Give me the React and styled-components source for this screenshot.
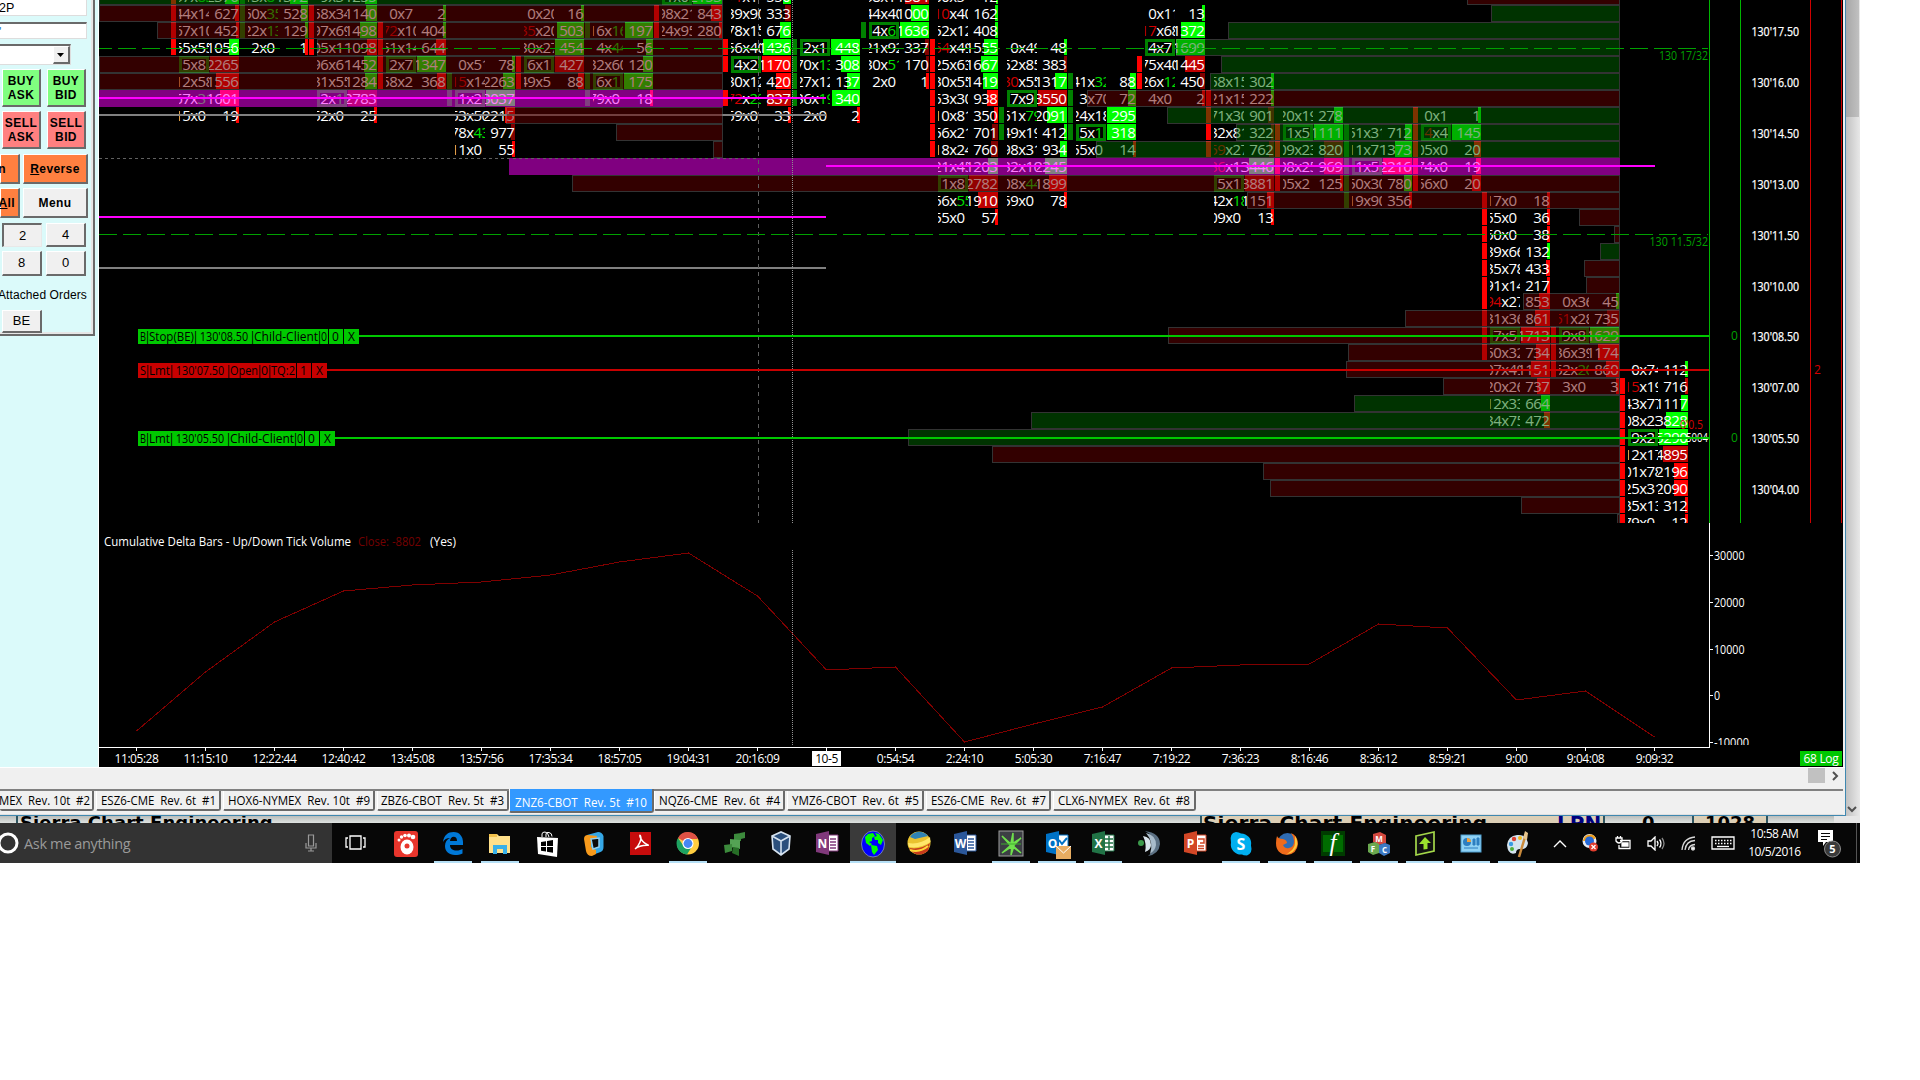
import React from 'react';
import styled, { createGlobalStyle, css } from 'styled-components';

const GlobalStyle = createGlobalStyle`
	* {
		box-sizing: border-box;
	}
	body {
		margin: 0;
		background: #ffffff;
		overflow: hidden;
	}
`;

const UI_FONT = '"Open Sans", "Noto Sans", sans-serif';
const PANEL_FONT = '"Liberation Sans", Arial, sans-serif';

/* ---------- chart data ---------- */

const ROW = 16.97;
const COLUMN = 69;
const FIRST_COLUMN = 171;
const rowTop = k => Math.round(5 + ROW * k);

const INK = {
	r: '#ff0000',
	d: '#c00000',
	m: '#800000',
	g: '#00ff00',
};

// cell: row, bid x ask, volume, width + colour of the volume bar, flags
// flags: b = point of control box, R = red bid, G = green ask
const COLUMNS = [
	{
		delta: 'r-1 r0 r1 r2',
		cells: [
			'-1 37x83 2376 14g G', '0 44x14 627 4r', '1 67x10 452 3r', '2 55x55 1056 10g',
			'3 5x8 2265 29d b', '4 12x58 1556 23r', '5 67x31 1601 19r G', '6 15x0 19 3r',
		],
	},
	{
		delta: 'g-1 g0 g1 r2',
		cells: ['-1 13x81 1372 18g G', '0 50x35 528 7g G', '1 22x13 129 3g G', '2 2x0 1 3r'],
		edge: 2,
	},
	{
		delta: 'r0 r1 r2',
		cells: [
			'-1 9x31 1255 12g', '0 58x34 1140 11g', '1 97x69 1498 17g', '2 05x11 1098 10r',
			'3 96x61 1452 13g', '4 31x55 1284 12g', '5 2x12 2783 29m bG', '6 52x0 25 3r',
		],
	},
	{
		delta: 'r1 r2 r3 r4',
		cells: ['0 0x7 2 3g', '1 72x10 404 3g R', '2 51x14 644 10r', '3 2x7 1347 29g b', '4 58x2 368 9r'],
	},
	{
		delta: 'g4 g5',
		cells: [
			'3 0x51 78 3g', '4 15x14 2263 12g R', '5 1x2 3037 29g b', '6 53x50 2215 10r',
			'7 78x43 977 4m G', '8 11x0 55 3r',
		],
	},
	{
		delta: 'r3 r4',
		cells: ['0 0x20 16 3g', '1 35x20 503 27g R', '2 30x27 454 29g', '3 6x1 427 29d b', '4 49x5 88 6r'],
	},
	{
		delta: 'g1 g4 g5',
		cells: ['1 16x16 197 28g G', '2 4x44 56 7g G', '3 32x60 120 10g', '4 6x1 175 29g bG', '5 79x0 18 3r'],
	},
	{
		delta: 'r0 r1',
		cells: ['-1 1x0 2153 29g b', '0 98x21 843 11r', '1 24x95 280 3r'],
	},
	{
		delta: 'r2 r3 r5',
		cells: [
			'-1 71x1 550 8g R', '0 39x90 333 6m', '1 78x15 676 11g', '2 56x40 1436 28g', '3 4x2 1170 29r b',
			'4 30x12 420 15r', '5 72x23 837 24d RG', '6 59x0 33 3r',
		],
	},
	{
		delta: 'g2 g3 g4 g5',
		cells: ['2 2x1 448 29g b', '3 70x13 308 19g G', '4 27x12 137 13g', '5 36x19 340 28g G', '6 2x0 2 3r'],
	},
	{
		delta: 'g1',
		cells: ['-1 38x1 1384 24d', '0 44x40 1000 18g', '1 4x6 1636 29g bG', '2 21x92 337 4m', '3 30x51 170 3m G', '4 2x0 1 3r'],
	},
	{
		delta: 'r2 r3 r4 r5 r6 r7 r8',
		cells: [
			'-1 60x5 12 2g', '0 10x40 162 3g R', '1 52x12 408 3g', '2 54x49 1555 14g R', '3 25x63 1667 17g',
			'4 30x55 1419 15g', '5 53x30 938 11r', '6 10x81 350 4r', '7 56x21 701 6m', '8 18x24 760 7m',
			'9 21x45 1203 10g', '10 1x8 2782 29d b', '11 56x55 1910 20d G', '12 55x0 57 3r',
		],
	},
	{
		delta: 'g6 g7',
		cells: [
			'2 0x49 48 3g', '3 52x85 383 3m', '4 30x55 1317 12g R', '5 7x9 3550 29d b', '6 51x79 2091 20g G',
			'7 49x19 412 3g', '8 98x31 934 7g', '9 32x10 2245 22g', '10 08x44 1899 18r G', '11 59x0 78 3r',
		],
	},
	{
		delta: 'g4 g5 g6 g7',
		cells: ['4 41x32 88 6g G', '5 3x70 72 8g', '6 24x18 295 29g', '7 5x1 318 29g bG', '8 55x0 14 3r'],
	},
	{
		delta: 'r3 r4',
		cells: ['0 0x11 13 3g', '1 17x68 1372 24g R', '2 4x7 1699 29g b', '3 75x40 1445 20d', '4 26x12 450 5m G', '5 4x0 2 3r'],
	},
	{
		delta: 'r5 r6 r7 r8',
		cells: [
			'4 58x15 302 3g', '5 21x15 222 3g', '6 71x30 901 6m', '7 32x81 322 3m', '8 59x27 762 5m R',
			'9 36x13 3446 25g R', '10 5x1 3881 29d b', '11 42x18 1151 7r G', '12 09x0 13 3r',
		],
	},
	{
		delta: 'r7 r8 r9 r10',
		cells: ['6 20x19 278 9g', '7 1x5 1111 29g b', '8 09x23 820 19m', '9 08x25 969 19d', '10 05x2 125 3r'],
	},
	{
		delta: 'g7 g8 g9 g10 g11',
		cells: ['7 51x31 712 7g', '8 11x71 1373 17g', '9 1x5 2216 29r b', '10 50x30 780 8g', '11 19x90 356 3r'],
	},
	{
		delta: 'r6 r7 r8 r9 r10',
		cells: ['6 0x1 1 3g', '7 4x4 145 29g bR', '8 05x0 20 7r', '9 74x0 19 5r', '10 56x0 20 9r'],
	},
	{
		delta: 'r11 r12 r13 r14 r15 r16 r17 r18 r19 r20',
		cells: [
			'11 17x0 18 3r', '12 55x0 36 3r', '13 50x0 38 3r', '14 39x66 132 3g', '15 35x78 433 4r',
			'16 91x14 217 3r', '17 94x27 853 11r R', '18 31x36 861 15r', '19 7x5 1713 29r b', '20 50x32 734 14r',
			'21 07x49 1151 19r', '22 20x26 737 13r', '23 12x33 664 9g', '24 34x75 472 6r',
		],
	},
	{
		delta: 'r19 r20 r21',
		cells: ['17 0x36 45 3g', '18 51x28 735 12m R', '19 9x8 1629 29g b', '20 36x39 1174 21r', '21 52x20 860 13r G', '22 3x0 3 3r'],
	},
	{
		delta: 'r22 r23 r24 r25 r26 r27 r28 r29 r30',
		cells: [
			'21 0x74 112 3g', '22 15x19 716 3d R', '23 43x77 1117 7g', '24 08x23 3828 22g', '25 9x2 5290 29g b',
			'26 12x17 4895 25d', '27 01x78 2196 14r', '28 25x31 2090 14r', '29 35x13 312 3r', '30 79x0 12 3r',
		],
	},
];

// volume profile bars: row, left edge, side
const PROFILES = [
	{
		right: 722.5,
		bars: [
			[-1, 99, 'up'], [0, 99, 'down'], [1, 157, 'down'], [2, 317, 'down'], [3, 99, 'down'],
			[4, 99, 'down'], [5, 99, 'poc'], [6, 506, 'down'], [7, 616, 'down'], [8, 713, 'down'],
		],
	},
	{
		right: 1619.5,
		bars: [
			[-1, 1467, 'down'], [0, 1491, 'up'], [1, 1228, 'up'], [2, 1176, 'up'], [3, 1221, 'up'],
			[4, 1210, 'up'], [5, 1087, 'down'], [6, 1167, 'up'], [7, 1236, 'up'], [8, 1096, 'up'],
			[9, 509, 'poc'], [10, 572, 'down'], [11, 1247, 'down'], [12, 1579, 'down'], [13, 1614, 'down'],
			[14, 1600, 'up'], [15, 1584, 'down'], [16, 1586, 'down'], [17, 1523, 'down'], [18, 1405, 'down'],
			[19, 1168, 'down'], [20, 1348, 'down'], [21, 1346, 'down'], [22, 1443, 'down'], [23, 1354, 'up'],
			[24, 1031, 'up'], [25, 908, 'up'], [26, 992, 'down'], [27, 1263, 'down'], [28, 1270, 'down'],
			[29, 1521, 'down'], [30, 1617, 'down'],
		],
	},
];

const PROFILE_FILL = { up: '#006600', down: '#660000', poc: '#ff00ff' };

const PRICES = [
	"130'17.50", "130'16.00", "130'14.50", "130'13.00", "130'11.50",
	"130'10.00", "130'08.50", "130'07.00", "130'05.50", "130'04.00",
];

const DELTA_POINTS = [
	731, 672, 622, 591, 585, 582, 575, 562, 553, 596, 670, 667, 742, 724, 707, 668, 665, 664, 624, 628, 700, 691, 737,
];

const DELTA_SCALE = [['30000', 555], ['20000', 602], ['10000', 649], ['0', 695], ['-10000', 742]];

const TIMES = [
	'11:05:28', '11:15:10', '12:22:44', '12:40:42', '13:45:08', '13:57:56', '17:35:34', '18:57:05',
	'19:04:31', '20:16:09', '10-5', '0:54:54', '2:24:10', '5:05:30', '7:16:47', '7:19:22', '7:36:23',
	'8:16:46', '8:36:12', '8:59:21', '9:00', '9:04:08', '9:09:32',
];

const ORDERS = [
	{ y: 336, side: '#00c800', parts: [['B', 8], ['Stop(BE)', 47], [" 130'08.50 ", 56], ['Child-Client', 66], ['0', 8]], qty: '0', start: 359 },
	{ y: 370, side: '#c80000', parts: [['S', 8], ['Lmt', 23], [" 130'07.50 ", 56], ['Open', 30], ['0', 9], ['TQ:2', 26]], qty: '1', start: 327 },
	{ y: 438, side: '#00c800', parts: [['B', 8], ['Lmt', 23], [" 130'05.50 ", 56], ['Child-Client', 66], ['0', 8]], qty: '0', start: 335 },
];

const TABS = [
	{ label: 'MEX  Rev. 10t  #2', width: 94, text: 91 },
	{ label: 'ESZ6-CME  Rev. 6t  #1', width: 125, text: 115 },
	{ label: 'HOX6-NYMEX  Rev. 10t  #9', width: 152, text: 142 },
	{ label: 'ZBZ6-CBOT  Rev. 5t  #3', width: 132, text: 123 },
	{ label: 'ZNZ6-CBOT  Rev. 5t  #10', width: 145, text: 132, active: true },
	{ label: 'NQZ6-CME  Rev. 6t  #4', width: 131, text: 121 },
	{ label: 'YMZ6-CBOT  Rev. 6t  #5', width: 137, text: 127 },
	{ label: 'ESZ6-CME  Rev. 6t  #7', width: 125, text: 115 },
	{ label: 'CLX6-NYMEX  Rev. 6t  #8', width: 143, text: 132 },
];

/* ---------- screen and order panel ---------- */

const Screen = styled.div`
	width: 1860px;
	height: 863px;
	display: flex;
	flex-direction: column;
	overflow: hidden;
	background: #d3d5d4;
	font-family: ${UI_FONT};
`;

const Desktop = styled.div`
	display: flex;
	height: 816px;
`;

const Window = styled.div`
	width: 1846px;
	height: 816px;
	display: flex;
	flex-direction: column;
	background: #f0f0f0;
	border-right: 1px solid #3f88b0;
	border-bottom: 1px solid #3f88b0;
`;

const Workspace = styled.div`
	display: flex;
	height: 767px;
`;

const Panel = styled.div`
	width: 99px;
	height: 767px;
	background: #dbfafa;
	border-right: 1px solid #ffffff;
	overflow: hidden;
`;

const PanelFrame = styled.div`
	width: 95px;
	height: 336px;
	border-right: 2px solid #6a6a6a;
	border-bottom: 2px solid #6a6a6a;
	box-shadow: inset -2px -2px 0 #e6e6e6;
	display: flex;
	flex-direction: column;
	align-items: flex-start;
	font-family: ${PANEL_FONT};
`;

const Field = styled.div`
	width: 87px;
	height: ${p => p.$height}px;
	margin-bottom: ${p => p.$gap}px;
	background: #ffffff;
	border-top: ${p => (p.$open ? 0 : 2)}px solid #6a6a6a;
	border-right: 1px solid #dddddd;
	border-bottom: 1px solid #dddddd;
	color: ${p => p.$color || '#000'};
	font-size: 12.5px;
	line-height: 16px;
	overflow: hidden;
`;

const FieldText = styled.span`
	margin-left: -1px;
`;

const Select = styled.div`
	width: 71px;
	height: 21px;
	margin-bottom: 4px;
	display: flex;
	justify-content: flex-end;
	background: #ffffff;
	border-top: 2px solid #6a6a6a;
	border-right: 1px solid #dddddd;
	border-bottom: 1px solid #dddddd;
`;

const Arrow = styled.div`
	width: 17px;
	height: 18px;
	display: flex;
	align-items: center;
	justify-content: center;
	background: #f0f0f0;
	border: 1px solid #fff;
	border-right: 2px solid #6a6a6a;
	border-bottom: 2px solid #6a6a6a;
`;

const ButtonRow = styled.div`
	display: flex;
	height: ${p => p.$height}px;
	margin-bottom: ${p => p.$gap}px;
	padding-left: ${p => p.$left || 0}px;
	gap: ${p => p.$space}px;
`;

const PanelButton = styled.div`
	width: ${p => p.$width}px;
	height: 100%;
	flex: none;
	display: flex;
	align-items: center;
	justify-content: ${p => (p.$cut ? 'flex-end' : 'center')};
	padding-right: ${p => p.$cut || 0}px;
	background: ${p => p.$color || '#f0f0f0'};
	border: 1px solid #ffffff;
	border-right: 2px solid #6a6a6a;
	border-bottom: 2px solid #6a6a6a;
	text-align: center;
	font-size: ${p => (p.$plain ? 13 : 12)}px;
	font-weight: ${p => (p.$plain ? 400 : 700)};
	letter-spacing: ${p => (p.$plain ? 0 : 0.4)}px;
	line-height: 14px;
	${p =>
		p.$pressed &&
		css`
			border: 1px solid #e8e8e8;
			border-top: 2px solid #6a6a6a;
			border-left: 2px solid #6a6a6a;
		`}
`;

const PanelLabel = styled.div`
	width: 87px;
	height: 34px;
	margin-left: -2px;
	padding-top: 12px;
	font-size: 12px;
	line-height: 14px;
	letter-spacing: 0.1px;
	white-space: nowrap;
`;

const OrderPanel = () => (
	<Panel>
		<PanelFrame>
			<Field $height={16} $gap={6} $open>
				<FieldText>2P</FieldText>
			</Field>
			<Field $height={17} $gap={5} $color="#2277cc">
				<FieldText>'</FieldText>
			</Field>
			<Select>
				<Arrow>
					<svg width="8" height="4">
						<path d="M0 0h7L3.500 4z" />
					</svg>
				</Arrow>
			</Select>
			<ButtonRow $height={38} $gap={4} $left={2} $space={6}>
				<PanelButton $width={39} $color="#80ff80">
					BUY
					<br />
					ASK
				</PanelButton>
				<PanelButton $width={39} $color="#80ff80">
					BUY
					<br />
					BID
				</PanelButton>
			</ButtonRow>
			<ButtonRow $height={38} $gap={5} $left={2} $space={6}>
				<PanelButton $width={39} $color="#ff8080">
					SELL
					<br />
					ASK
				</PanelButton>
				<PanelButton $width={39} $color="#ff8080">
					SELL
					<br />
					BID
				</PanelButton>
			</ButtonRow>
			<ButtonRow $height={30} $gap={4} $space={3}>
				<PanelButton $width={20} $color="#ff8040" $cut={12}>
					n
				</PanelButton>
				<PanelButton $width={65} $color="#ff8040">
					<u>R</u>everse
				</PanelButton>
			</ButtonRow>
			<ButtonRow $height={30} $gap={5} $space={3}>
				<PanelButton $width={20} $color="#ff8040" $cut={3}>
					<u>A</u>ll
				</PanelButton>
				<PanelButton $width={65}>Menu</PanelButton>
			</ButtonRow>
			<ButtonRow $height={24} $gap={4} $left={2} $space={4}>
				<PanelButton $width={40} $plain $pressed>
					2
				</PanelButton>
				<PanelButton $width={40} $plain>
					4
				</PanelButton>
			</ButtonRow>
			<ButtonRow $height={25} $gap={0} $left={2} $space={4}>
				<PanelButton $width={40} $plain>
					8
				</PanelButton>
				<PanelButton $width={40} $plain>
					0
				</PanelButton>
			</ButtonRow>
			<PanelLabel>Attached Orders</PanelLabel>
			<ButtonRow $height={23} $gap={0} $left={2} $space={4}>
				<PanelButton $width={40} $plain>
					BE
				</PanelButton>
			</ButtonRow>
		</PanelFrame>
	</Panel>
);

/* ---------- charts ---------- */

const ChartColumn = styled.div`
	width: 1744px;
	height: 767px;
	display: flex;
	flex-direction: column;
	background: #000;
`;

const ChartSvg = styled.svg`
	display: block;
	flex: none;
	font-family: ${UI_FONT};
	shape-rendering: crispEdges;
`;

const CellText = styled.text`
	font-size: 15px;
	letter-spacing: -0.58px;
	fill: #ffffff;
`;

const AxisText = styled.text`
	font-size: 12px;
	fill: ${p => p.$color || '#ffffff'};
`;

const Cell = ({ source, left }) => {
	const [row, pair, volume, bar, flags = ''] = source.split(' ');
	const [bid, ask] = pair.split('x');
	const top = rowTop(Number(row));
	const width = parseInt(bar, 10);
	const boxed = flags.includes('b');
	const inset = boxed ? 3 : 0;
	return (
		<g>
			<rect x={left + 68 - width} y={top} width={width} height="16" fill={INK[bar.slice(-1)]} />
			{boxed && (
				<rect x={left + 9.5} y={top + 1.5} width="27" height="14" fill="none" stroke="#008000" strokeWidth="3" />
			)}
			<svg x={left + 8 + inset} y={top} width={30 - inset * 2} height={17 - inset}>
				<CellText x={11.3 - inset - 8 * bid.length} y="14">
					<tspan fill={flags.includes('R') ? '#d00000' : '#fff'}>{bid}</tspan>
					<tspan>x</tspan>
					<tspan fill={flags.includes('G') ? '#00e000' : '#fff'}>{ask}</tspan>
				</CellText>
			</svg>
			<svg x={left + 38} y={top} width="30" height="17">
				<CellText x={29.3 - 8 * volume.length} y="14">
					{volume}
				</CellText>
			</svg>
		</g>
	);
};

const FootprintColumn = ({ column, left }) => (
	<g>
		{column.delta.split(' ').map(item => (
			<rect
				key={item}
				x={column.edge === Number(item.slice(1)) ? left + 65 : left}
				y={rowTop(Number(item.slice(1)))}
				width={column.edge === Number(item.slice(1)) ? 3 : 5}
				height="16"
				fill={item[0] === 'r' ? '#ff0000' : '#008000'}
			/>
		))}
		{column.cells.map(source => (
			<Cell key={source} source={source} left={left} />
		))}
	</g>
);

const Profile = ({ right, bars }) => (
	<g opacity="0.5">
		{bars.map(([row, left, side]) => (
			<rect
				key={row}
				x={side === 'poc' ? left : left + 0.5}
				y={side === 'poc' ? rowTop(row) : rowTop(row) + 0.5}
				width={side === 'poc' ? right - left + 0.5 : right - left - 0.5}
				height={side === 'poc' ? 17 : 16}
				fill={PROFILE_FILL[side]}
				stroke={side === 'poc' ? 'none' : '#666666'}
			/>
		))}
	</g>
);

const OrderLabel = ({ order }) => {
	let x = 138;
	return (
		<g fontSize="12">
			<rect x={138} y={order.y - 7} width={order.start - 138} height="15" fill={order.side} />
			{order.parts.map(([text, width], i) => {
				const at = x;
				x += width + 1;
				return (
					<g key={i}>
						{i > 0 && (
							<text x={at + 0.5} y={order.y + 4.5} textAnchor="middle">
								|
							</text>
						)}
						<text x={at + 2} y={order.y + 5} textLength={width - 2} lengthAdjust="spacingAndGlyphs">
							{text.trim() === text ? text : `\u00a0${text.trim()}\u00a0`}
						</text>
					</g>
				);
			})}
			<rect x={order.start - 31} y={order.y - 7} width="1" height="15" fill="#000" />
			<rect x={order.start - 16} y={order.y - 7} width="1" height="15" fill="#000" />
			<text x={order.start - 23.5} y={order.y + 5} textAnchor="middle">
				{order.qty}
			</text>
			<text x={order.start - 7.5} y={order.y + 5} textAnchor="middle">
				X
			</text>
			<rect x={order.start} y={order.y - 1} width={1709 - order.start} height="2" fill={order.side} />
		</g>
	);
};

const PriceChart = () => (
	<ChartSvg width="1744" height="523" viewBox="99 0 1744 523">
		{COLUMNS.map((column, i) => (
			<FootprintColumn key={i} column={column} left={FIRST_COLUMN + i * COLUMN} />
		))}
		<path d="M99 115h727M99 268h727" stroke="#808080" strokeWidth="2" />
		{PROFILES.map(profile => (
			<Profile key={profile.right} {...profile} />
		))}
		<path d="M758.5 0V523" stroke="#606060" strokeDasharray="4 4" />
		<path d="M99 158.5H758" stroke="#606060" strokeDasharray="3 3" />
		<path d="M792.5 0V523" stroke="#909090" strokeDasharray="1 1" />
		<path d="M99 98h727M99 217h727M826 166h829" stroke="#ff00ff" strokeWidth="2" />
		<path d="M93.5 48.5H1708" stroke="#00a000" strokeDasharray="18 6" />
		<path d="M99 234.5H1708" stroke="#00a000" strokeDasharray="18 6" />
		<AxisText x="1659" y="60" textLength="49" lengthAdjust="spacingAndGlyphs" $color="#00a000">
			130 17/32
		</AxisText>
		<AxisText x="1649.5" y="246" textLength="58.5" lengthAdjust="spacingAndGlyphs" $color="#00a000">
			130 11.5/32
		</AxisText>
		<AxisText x="1680" y="429" textLength="23" lengthAdjust="spacingAndGlyphs" $color="#d00000">
			0'0.5
		</AxisText>
		<AxisText x="1686" y="442" textLength="22" lengthAdjust="spacingAndGlyphs">
			5004
		</AxisText>
		{ORDERS.map(order => (
			<OrderLabel key={order.y} order={order} />
		))}
		<path d="M1709.5 0V523M1740.5 0V523" stroke="#00b400" />
		<path d="M1810.5 0V523M1841.5 0V523" stroke="#d00000" />
		<AxisText x="1731" y="340" $color="#00a000">
			0
		</AxisText>
		<AxisText x="1731" y="442" $color="#00a000">
			0
		</AxisText>
		<AxisText x="1814" y="374" $color="#d00000">
			2
		</AxisText>
		{PRICES.map((price, i) => (
			<AxisText
				key={price}
				x="1751.5"
				y={rowTop(1 + i * 3) + 13.7}
				textLength="47.5"
				lengthAdjust="spacingAndGlyphs"
				stroke="#fff"
				strokeWidth="0.25"
			>
				{price}
			</AxisText>
		))}
	</ChartSvg>
);

const DeltaChart = () => (
	<ChartSvg width="1744" height="228" viewBox="99 523 1744 228">
		<AxisText x="104" y="546" textLength="247" lengthAdjust="spacingAndGlyphs">
			Cumulative Delta Bars - Up/Down Tick Volume
		</AxisText>
		<AxisText x="358" y="546" textLength="63" lengthAdjust="spacingAndGlyphs" $color="#740000">
			Close: -8802
		</AxisText>
		<AxisText x="430" y="546" textLength="26" lengthAdjust="spacingAndGlyphs">
			(Yes)
		</AxisText>
		<path d="M792.5 550V745" stroke="#909090" strokeDasharray="1 1" />
		<polyline
			points={DELTA_POINTS.map((y, i) => `${136.5 + i * COLUMN},${y}`).join(' ')}
			fill="none"
			stroke="#800000"
		/>
		<path d="M1709.5 523V747.5H99" fill="none" stroke="#ffffff" />
		{TIMES.map((time, i) => (
			<rect key={time} x={136 + i * COLUMN} y="748" width="1" height="3" fill="#fff" />
		))}
		<svg x="1709" y="523" width="130" height="222" viewBox="1709 523 130 222">
			{DELTA_SCALE.map(([label, y]) => (
				<g key={label}>
					<rect x="1710" y={y} width="3" height="1" fill="#fff" />
					<AxisText x="1714" y={y + 5} textLength={label === '-10000' ? 35 : label.length * 6.1} lengthAdjust="spacingAndGlyphs">
						{label}
					</AxisText>
				</g>
			))}
		</svg>
	</ChartSvg>
);

const TimeAxis = styled.div`
	height: 15px;
	display: flex;
	padding-left: 3px;
	color: #ffffff;
	font-size: 12px;
	line-height: 15px;
`;

const Time = styled.div`
	width: 69px;
	display: flex;
	justify-content: center;
	letter-spacing: -0.45px;
`;

const DayMark = styled.span`
	padding: 0 3px;
	background: #ffffff;
	color: #000000;
`;

const LogBadge = styled.div`
	width: 42px;
	margin-left: 111px;
	background: #00c800;
	text-align: center;
	letter-spacing: -0.3px;
`;

/* ---------- scroll bar and tabs ---------- */

const ScrollRow = styled.div`
	height: 22px;
	display: flex;
	align-items: flex-start;
	justify-content: flex-end;
	padding-right: 5px;
	border-top: 1px solid #ffffff;
`;

const Thumb = styled.div`
	width: 17px;
	height: 15px;
	margin-right: 5px;
	background: #c1c1c1;
`;

const TabBar = styled.div`
	height: 26px;
	display: flex;
	align-items: flex-start;
	margin-right: 2px;
	border-top: 2px solid #808080;
	border-bottom: 1px solid #e0e0e0;
`;

const Tab = styled.div`
	width: ${p => p.$width}px;
	height: ${p => (p.$active ? 24 : 20)}px;
	margin-top: ${p => (p.$active ? -2 : 0)}px;
	margin-right: ${p => (p.$tight || p.$active ? 0 : 2)}px;
	display: flex;
	align-items: flex-start;
	justify-content: ${p => (p.$first ? 'flex-start' : 'center')};
	background: ${p => (p.$active ? '#3399ff' : '#f0f0f0')};
	border-left: ${p => (p.$first ? 0 : 1)}px solid #ffffff;
	border-right: 2px solid #6a6a6a;
	border-bottom: 2px solid #6a6a6a;
	border-radius: 0 0 3px 2px;

	svg {
		overflow: visible;
	}

	text {
		font-size: 12.5px;
		fill: ${p => (p.$active ? '#ffffff' : '#000000')};
		white-space: pre;
	}
`;

const Tabs = () => (
	<TabBar>
		{TABS.map((tab, i) => (
			<Tab key={tab.label} $width={tab.width} $active={tab.active} $first={i === 0} $tight={i === 3}>
				<svg width={tab.text} height="18">
					<text x={i === 0 ? -1 : 0} y={tab.active ? 18 : 14} textLength={tab.text} lengthAdjust="spacingAndGlyphs">
						{tab.label}
					</text>
				</svg>
			</Tab>
		))}
	</TabBar>
);

const PageScroll = styled.div`
	width: 14px;
	height: 816px;
	display: flex;
	flex-direction: column;
	justify-content: space-between;
	align-items: center;
	background: linear-gradient(90deg, #c2c2c2, #e8e8e8);
`;

const PageThumb = styled.div`
	width: 13px;
	height: 117px;
	margin-right: 1px;
	background: linear-gradient(90deg, #a8a8a8, #c0c0c0);
`;

/* ---------- strip of the page behind the window ---------- */

const Strip = styled.div`
	height: 7px;
	display: flex;
	overflow: hidden;
	font-family: "DejaVu Sans", sans-serif;
	font-weight: 700;
	line-height: 20px;
	background: linear-gradient(#b9bdbb, #dfe3e1);
`;

const StripCell = styled.div`
	width: ${p => p.$width}px;
	flex: none;
	height: 22px;
	margin-top: -3px;
	padding-left: ${p => p.$pad || 0}px;
	border-left: ${p => (p.$line ? '2px solid #2f5560' : 0)};
	background: ${p => p.$color || 'transparent'};
	color: ${p => p.$ink || '#000'};
	font-size: ${p => p.$size || 18}px;
	white-space: nowrap;
	letter-spacing: ${p => p.$track || 0}px;
`;

/* ---------- task bar ---------- */

const TaskBar = styled.div`
	height: 40px;
	flex: none;
	display: flex;
	background: #070707;
	color: #ffffff;
`;

const Search = styled.div`
	width: 332px;
	display: flex;
	align-items: center;
	background: #333333;
	color: #9a9a9a;
	font-size: 14.5px;
	letter-spacing: -0.35px;
`;

const SearchText = styled.div`
	width: 286px;
	padding-left: 5px;
`;

const TaskView = styled.div`
	width: 50px;
	display: flex;
	align-items: center;
	padding-left: 13px;
`;

const Slot = styled.div`
	width: ${p => p.$width}px;
	height: 40px;
	flex: none;
	display: flex;
	flex-direction: column;
	align-items: center;
	justify-content: space-between;
	padding-top: 8px;
	background: ${p => (p.$focused ? '#3a3a3a' : 'transparent')};
`;

const Underline = styled.div`
	width: ${p => (p.$focused ? 46 : 38)}px;
	height: 2px;
	background: ${p => (p.$running ? '#b5dff5' : 'transparent')};
`;

const Tray = styled.div`
	display: flex;
	align-items: center;
	padding-left: 13px;
	gap: 15.4px;
`;

const Clock = styled.div`
	width: 62px;
	margin: 0 -4px 0 -7px;
	text-align: center;
	font-size: 12px;
	line-height: 18px;
	letter-spacing: -0.5px;
`;

const PeekLine = styled.div`
	width: 1px;
	height: 40px;
	margin-left: auto;
	margin-right: 3px;
	background: #555;
`;

const glyph = { fontFamily: UI_FONT, fontWeight: 700, textAnchor: 'middle', fill: '#fff' };

const Office = ({ color, letter, children }) => (
	<>
		<path d="M12 4h11v16H12z" fill="#fff" stroke={color} />
		{children || <path d="M15 8h6M15 11h6M15 14h6M15 17h6" stroke={color} strokeWidth="1.5" />}
		<path d="M1 3l13-3v24L1 21z" fill={color} />
		<text x="7.5" y="16.5" fontSize="12" {...glyph}>
			{letter}
		</text>
	</>
);

const APPS = [
	{
		name: 'foot',
		art: (
			<>
				<rect width="24" height="26" rx="3" fill="#e8352c" />
				<ellipse cx="13" cy="16" rx="6.5" ry="7.5" fill="#fff" />
				<circle cx="13" cy="15" r="2.5" fill="#e8352c" />
				<g fill="#fff">
					<circle cx="5" cy="9" r="1.5" />
					<circle cx="7.5" cy="6" r="1.7" />
					<circle cx="11" cy="4.5" r="1.8" />
					<circle cx="15" cy="4.5" r="2" />
					<circle cx="19" cy="6" r="2.3" />
				</g>
			</>
		),
	},
	{
		name: 'edge',
		running: true,
		art: (
			<path
				d="M2 11C3 4 7 1 12.500 1 19 1 22 6 22 11v3H9c0 4 3 5.500 6.500 5.500 2.500 0 4.500-.7 6-1.500v4.500C19 23.500 17 24 14 24 8 24 4 20.500 4 15c0-4 2-6.500 5-8C5.500 7 3.500 8.500 2 11zM9 10h7c0-3-1.300-4.300-3.300-4.300C10.500 5.700 9.300 7.500 9 10z"
				fill="#0078d7"
			/>
		),
	},
	{
		name: 'folder',
		running: true,
		art: (
			<>
				<path d="M1 3h8l2 2h11v17H1z" fill="#ffe08a" />
				<path d="M1 3h8v3H1z" fill="#f2c14b" />
				<path d="M5 14h14v9h-4v-5H9v5H5z" fill="#38b0e8" />
			</>
		),
	},
	{
		name: 'store',
		art: (
			<>
				<path d="M7 6V3q0-2 3-2t4 5M11 6V3q0-2 3-1.500t3 4" fill="none" stroke="#fff" />
				<path d="M2 6l21 1-1 19-19-3z" fill="#fff" />
				<path d="M6 11l5-.8v4.800H6zM12 10l6-1v6h-6zM6 16h5v4.500l-5-.8zM12 16h6v5.800l-6-1z" fill="#000" />
			</>
		),
	},
	{
		name: 'vm',
		art: (
			<>
				<path d="M5 4l11-3q4 0 5.500 4v11q0 4-3 5l-8 3q-4 0-5-4z" fill="#35a7e6" />
				<path d="M2 8q0-4 4-4l9 1-1 4H9v7l5 3v4l-4 2q-5 0-6-5z" fill="#f79a1c" />
				<path d="M9 8l8-1v9l-6 2z" fill="#0b0b0b" stroke="#8fd0f2" strokeWidth="1.5" />
			</>
		),
	},
	{
		name: 'reader',
		art: (
			<>
				<rect x="1" y="1" width="21" height="23" fill="#c60c0c" />
				<path d="M6 18C10 15 13 8 11.500 5s-1 5 7.500 9c2 1-7-1-13 4z" fill="none" stroke="#fff" strokeWidth="1.5" />
			</>
		),
	},
	{
		name: 'chrome',
		running: true,
		art: (
			<>
				<circle cx="12" cy="12.5" r="11" fill="#ffcd40" />
				<path d="M12 12.500L2 7A11 11 0 0 1 22 8H12z" fill="#de5145" />
				<path d="M2 7A11 11 0 0 0 11 23.500l5-8-8 0z" fill="#1da261" />
				<circle cx="12" cy="12.5" r="5.5" fill="#fff" />
				<circle cx="12" cy="12.5" r="4.4" fill="#4587f3" />
			</>
		),
	},
	{
		name: 'blocks',
		art: (
			<>
				<path d="M11 3l7-1v8l-7 1zM17 2l5-1v6l-4 1z" fill="#3c8a3c" />
				<path d="M7 8l10 1v9l-10-2z" fill="#54a354" />
				<path d="M1 14l8-1v7l-7 2z" fill="#3c8a3c" />
				<path d="M10 16l6 1v8l-7-3z" fill="#276e27" />
			</>
		),
	},
	{
		name: 'cube',
		art: (
			<>
				<path d="M12 1l9 4-1 13-8 6-8-6L3 5z" fill="#2b4f7c" />
				<path d="M3 5l9 5 9-5M12 10v13M3 5l9-4 9 4-1 13-8 6-8-6z" fill="none" stroke="#d5e2ef" strokeWidth="1.6" />
			</>
		),
	},
	{ name: 'onenote', art: <Office color="#80397b" letter="N" /> },
	{
		name: 'globe',
		running: true,
		focused: true,
		art: (
			<>
				<ellipse cx="12" cy="13" rx="11.5" ry="13" fill="#0000ff" stroke="#99aaaa" strokeWidth="0.7" />
				<path d="M4 6l3-3 5-1 2 3-3 2 0 3-3 1 3 2-2 2-4-3zM14 2l4 1 4 6-2 5-3-2 0-3-3 0-1-3 3-1zM10 14l6 1 1 4-4 5-2-3z" fill="#00ff00" />
			</>
		),
	},
	{
		name: 'ball',
		art: (
			<>
				<circle cx="12" cy="12" r="11.5" fill="#e9c22f" />
				<path d="M3 6a11 11 0 0 1 18-1L8 8z" fill="#2f83b5" />
				<path d="M2 17q12 2 21-5l-2 8q-9 7-17 0z" fill="#c73a1b" />
				<path d="M1 12q12 2 22-6l.5 5Q13 18 2 16z" fill="#ffe76a" />
				<path d="M3 19q10 3 18-4" fill="none" stroke="#ffd837" strokeWidth="2" />
			</>
		),
	},
	{ name: 'word', art: <Office color="#2b579a" letter="W" /> },
	{
		name: 'star',
		running: true,
		art: (
			<>
				<rect width="24" height="25" fill="#3c3f44" stroke="#a0a0a0" />
				<path d="M12 12L14 2l0 10zM12 13L3 5l8 9zM13 13l9-6-8 8zM12 14l-9 8 9-6zM13 14l-1 10 3-9zM13 14l9 8-8-6z" fill="#6fe04c" stroke="#6fe04c" strokeWidth="1.5" />
				<path d="M2 13h20" stroke="#3fae2c" />
			</>
		),
	},
	{
		name: 'outlook',
		running: true,
		art: (
			<>
				<Office color="#0072c6" letter="O">
					<path d="M14 9l3 4 5-6" fill="none" stroke="#0072c6" strokeWidth="2" />
				</Office>
				<path d="M11 15h15v13H11z" fill="#e8ad62" />
				<path d="M11 15l7.500 7 7.500-7" fill="none" stroke="#fff" />
			</>
		),
	},
	{
		name: 'excel',
		running: true,
		art: (
			<Office color="#217346" letter="X">
				<path d="M13 8h9M13 12h9M13 16h9M18 5v14" stroke="#217346" strokeWidth="1.5" />
			</Office>
		),
	},
	{
		name: 'speak',
		art: (
			<>
				<path d="M8 0q15 2 15 13-1 10-12 12 7-5 7-11Q18 5 8 0z" fill="#5c7184" />
				<path d="M9 2q10 2 10 12-1 6-6 9 4-12-4-21z" fill="#a9bccb" />
				<path d="M6 5q8 1 8 9 0 5-6 7 2-8-2-16z" fill="#d9e4ec" />
				<circle cx="4" cy="12" r="3" fill="#3c9a4c" />
			</>
		),
	},
	{
		name: 'slides',
		art: (
			<Office color="#d24726" letter="P">
				<path d="M15 8h6v4h-4M15 15h6M15 17.500h6" fill="none" stroke="#d24726" strokeWidth="1.5" />
			</Office>
		),
	},
	{
		name: 'skype',
		running: true,
		art: (
			<>
				<path d="M7 1q3 0 5 1.500a10 10 0 0 1 10 12Q24 22 18 24.500q-4 0-5-1a10 10 0 0 1-11-12Q0 2 7 1z" fill="#00aff0" />
				<text x="12" y="18.5" fontSize="16" {...glyph}>
					S
				</text>
			</>
		),
	},
	{
		name: 'firefox',
		running: true,
		art: (
			<>
				<circle cx="12.5" cy="12" r="10" fill="#2f6cb3" />
				<path d="M2 5q1 3 6 3 4 1 4 4l-4 2q2 4 6 3 5-1 5-7 0-4-3-8 7 3 7 11-1 10-11 11Q1 23 1 12q0-4 1-7z" fill="#ee6b1b" />
				<path d="M20 5q3 4 2 10-3 7-10 8 8-5 8-11z" fill="#ffc83a" />
			</>
		),
	},
	{
		name: 'script',
		running: true,
		art: (
			<>
				<rect width="24" height="25" fill="#003c00" />
				<path d="M2 4h9v17H2zM13 4h9v17h-9z" fill="#006c00" />
				<text x="12" y="20" fontSize="25" fontStyle="italic" fontFamily="Liberation Serif, serif" textAnchor="middle" fill="#fff">
					f
				</text>
			</>
		),
	},
	{
		name: 'cubes',
		running: true,
		art: (
			<>
				<path d="M6 3l7-2 6 3v8l-7 2-6-3z" fill="#d4493f" />
				<path d="M1 13l7-2 4 2v9l-6 2-5-3z" fill="#6aa84f" />
				<path d="M12 14l6-2 5 2v8l-6 3-5-3z" fill="#3c78c3" />
				<g fontSize="8">
					<text x="12" y="11" {...glyph}>M</text>
					<text x="6" y="21" {...glyph}>F</text>
					<text x="17.5" y="21.5" {...glyph}>C</text>
				</g>
			</>
		),
	},
	{
		name: 'arrow',
		running: true,
		art: (
			<>
				<path d="M3 5l18-4v19l-18 4z" fill="#111" stroke="#a4d84a" strokeWidth="1.7" />
				<path d="M12 6l6 6h-3.500v6l-4 .5V13H6z" fill="#9be22d" />
			</>
		),
	},
	{
		name: 'card',
		running: true,
		art: (
			<>
				<rect x="2" y="4" width="20" height="17" fill="#8fd2f5" stroke="#4e9fd0" />
				<circle cx="8" cy="11" r="4" fill="#2d7ec0" />
				<path d="M8 11V7a4 4 0 0 1 4 4z" fill="#f4a23a" />
				<path d="M14 8h2v6h-2zM18 7h2v7h-2zM5 17h14" fill="#2d7ec0" stroke="#2d7ec0" />
			</>
		),
	},
	{
		name: 'paint',
		running: true,
		art: (
			<>
				<path d="M2 14Q3 5 12 4t11 8q-1 7-8 6-4 0-4 4-8 3-9-8z" fill="#d3e3ee" />
				<circle cx="6" cy="13" r="2.2" fill="#3a9be0" />
				<circle cx="9" cy="8" r="2.2" fill="#dd4030" />
				<circle cx="15" cy="7" r="2" fill="#f2b91d" />
				<circle cx="7" cy="18" r="2" fill="#4fae3b" />
				<path d="M20 6l-6 20" stroke="#c98a3c" strokeWidth="2.5" />
				<path d="M18 7l2-7 3 2-1 7z" fill="#e6c48c" />
			</>
		),
	},
];

const TrayIcons = () => (
	<Tray>
		<svg width="14" height="9" fill="none" stroke="#fff" strokeWidth="1.4">
			<path d="M1 8l6-6 6 6" />
		</svg>
		<svg width="17" height="20">
			<circle cx="7.5" cy="8" r="7" fill="#e9edf4" />
			<path d="M1 8a7 7 0 0 1 13-3L9 8z" fill="#f0a020" />
			<circle cx="7.5" cy="8" r="4.5" fill="#2468d8" />
			<circle cx="11.5" cy="14" r="4.5" fill="#e03c2c" />
			<path d="M9.500 12l4 4m0-4l-4 4" stroke="#fff" strokeWidth="1.3" />
		</svg>
		<svg width="17" height="14" fill="none" stroke="#fff" strokeWidth="1.3">
			<path d="M5 4.500h10v8H4V9M1 2h6v3q-3 4-6 0zM2.500 2V0M5.500 2V0" />
			<path d="M7 7h6v3H7z" fill="#fff" />
		</svg>
		<svg width="18" height="15" fill="none" stroke="#fff" strokeWidth="1.3">
			<path d="M1 5h3l4-4v13l-4-4H1z" />
			<path d="M10 5q2 2.500 0 5M12.500 3.500q3 4 0 8" />
			<path d="M15 2q4 5.500 0 11" stroke="#888" />
		</svg>
		<svg width="15" height="15" fill="none" stroke="#d8d8d8" strokeWidth="1.3">
			<path d="M1 14Q2 2 14 1M4 14q1-9 10-9.500M7.500 14Q8 9 14 8.500" />
			<circle cx="12" cy="12.5" r="1.5" fill="#fff" />
		</svg>
		<svg width="24" height="14" fill="none" stroke="#fff" strokeWidth="1.3">
			<path d="M1 1h22v12H1z" />
			<path d="M4 4.500h17M4 7.500h17" strokeDasharray="1.500 1.500" />
			<path d="M6 10.500h12" />
		</svg>
		<Clock>
			10:58 AM
			<br />
			10/5/2016
		</Clock>
		<svg width="28" height="26" overflow="visible">
			<path d="M1 0h15v12H9l-3 4v-4H1z" fill="#fff" />
			<path d="M4 3.500h9M4 6.500h9M4 9.500h6" stroke="#070707" />
			<circle cx="15.5" cy="19" r="8" fill="#3a3a3a" stroke="#8a8a8a" />
			<text x="15.5" y="23" fontSize="11" {...glyph}>
				5
			</text>
		</svg>
	</Tray>
);

const BottomBar = () => (
	<TaskBar>
		<Search>
			<svg width="19" height="24" fill="none">
				<circle cx="8" cy="12" r="9" stroke="#fff" strokeWidth="3" />
			</svg>
			<SearchText>Ask me anything</SearchText>
			<svg width="12" height="18" fill="none" stroke="#9a9a9a" strokeWidth="1.2">
				<path d="M3.500 1h5v11h-5zM1 9v5h10V9M6 14v3M3 17h6" />
			</svg>
		</Search>
		<TaskView>
			<svg width="22" height="16" fill="none" stroke="#fff" strokeWidth="1.3">
				<path d="M5 1h11v13H5zM3 3H1v9h2M18 3h2v9h-2" />
			</svg>
		</TaskView>
		{APPS.map((app, i) => (
			<Slot key={app.name} $width={i < 8 ? 47 : 46} $focused={app.focused}>
				<svg width="24" height="26" overflow="visible">
					{app.art}
				</svg>
				<Underline $running={app.running} $focused={app.focused} />
			</Slot>
		))}
		<TrayIcons />
		<PeekLine />
	</TaskBar>
);

const App = () => (
	<>
		<GlobalStyle />
		<Screen>
			<Desktop>
				<Window>
					<Workspace>
						<OrderPanel />
						<ChartColumn>
							<PriceChart />
							<DeltaChart />
							<TimeAxis>
								{TIMES.map(time => (
									<Time key={time}>{time === '10-5' ? <DayMark>{time}</DayMark> : time}</Time>
								))}
								<LogBadge>68 Log</LogBadge>
							</TimeAxis>
						</ChartColumn>
					</Workspace>
					<ScrollRow>
						<Thumb />
						<svg width="10" height="14" fill="none" stroke="#505050" strokeWidth="2">
							<path d="M3 4l4 4-4 4" />
						</svg>
					</ScrollRow>
					<Tabs />
				</Window>
				<PageScroll>
					<PageThumb />
					<svg width="12" height="10" fill="none" stroke="#505050" strokeWidth="2">
						<path d="M1 1l4 4 4-4" />
					</svg>
				</PageScroll>
			</Desktop>
			<Strip>
				<StripCell $width={16} />
				<StripCell $width={1184} $pad={2} $track={0.05} $line>
					Sierra Chart Engineering
				</StripCell>
				<StripCell $width={357} $pad={1} $size={20} $track={0.2} $line $color="#dccfb6">
					Sierra Chart Engineering
				</StripCell>
				<StripCell $width={46} $size={20} $color="#dccfb6" $ink="#000080">
					LPN
				</StripCell>
				<StripCell $width={89} $pad={37} $line>
					0
				</StripCell>
				<StripCell $width={74} $pad={11} $line $color="#dccfb6">
					1028
				</StripCell>
				<StripCell $width={68} $line />
				<StripCell $width={26} $color="#e6e6e6" />
			</Strip>
			<BottomBar />
		</Screen>
	</>
);

export default App;
